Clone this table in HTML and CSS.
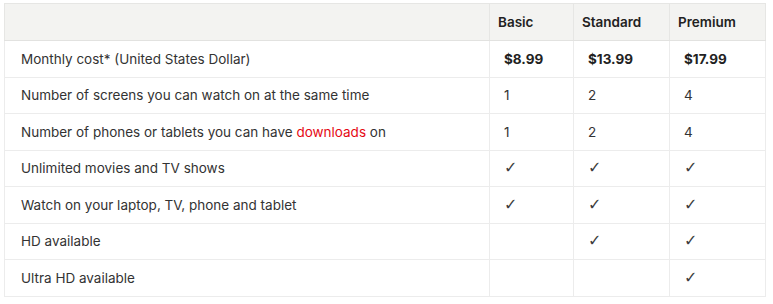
FILE: index.html
```html
<!DOCTYPE html>
<html lang="en">
<head>
<meta charset="utf-8">
<link rel="stylesheet" href="styles.css">
</head>
<body>
<div class="wrap">
<table class="plans">
  <colgroup>
    <col class="c-feat"><col class="c-basic"><col class="c-std"><col class="c-prem">
  </colgroup>
  <thead>
    <tr><th></th><th>Basic</th><th>Standard</th><th>Premium</th></tr>
  </thead>
  <tbody>
    <tr><td class="feat">Monthly cost* (United States Dollar)</td><td class="price">$8.99</td><td class="price">$13.99</td><td class="price">$17.99</td></tr>
    <tr><td class="feat">Number of screens you can watch on at the same time</td><td>1</td><td>2</td><td>4</td></tr>
    <tr><td class="feat">Number of phones or tablets you can have <a class="link" href="#">downloads</a> on</td><td>1</td><td>2</td><td>4</td></tr>
    <tr><td class="feat">Unlimited movies and TV shows</td><td><span class="chk">✓</span></td><td><span class="chk">✓</span></td><td><span class="chk">✓</span></td></tr>
    <tr><td class="feat">Watch on your laptop, TV, phone and tablet</td><td><span class="chk">✓</span></td><td><span class="chk">✓</span></td><td><span class="chk">✓</span></td></tr>
    <tr><td class="feat">HD available</td><td></td><td><span class="chk">✓</span></td><td><span class="chk">✓</span></td></tr>
    <tr><td class="feat">Ultra HD available</td><td></td><td></td><td><span class="chk">✓</span></td></tr>
  </tbody>
</table>
</div>
</body>
</html>
```
FILE: styles.css
```css
html, body { margin: 0; padding: 0; background: #fff; }
.wrap { padding: 3px 8px 0 4px; }
.plans {
  border-collapse: collapse;
  width: 761px;
  table-layout: fixed;
  font-family: Inter, "Noto Sans", sans-serif;
  font-size: 13.5px;
  color: #333;
  border: 1px solid #d6d6d6;
}
.c-feat { width: 485px; }
.c-basic { width: 84px; }
.c-std { width: 96px; }
.c-prem { width: 96px; }
.plans th {
  background: #f3f3f1;
  height: 36px;
  text-align: left;
  padding: 0 8px;
  font-weight: 600;
  color: #222;
  border: 1px solid #e6e6e4;
  border-bottom-color: #e2e2e0;
}
.plans td {
  height: 35.5px;
  padding: 0 14px;
  border: 1px solid #ececec;
  vertical-align: middle;
}
.plans td.feat { padding-left: 16px; }
.plans td.price { font-weight: 700; color: #222; }
.chk { font-family: "DejaVu Sans", sans-serif; font-size: 16px; line-height: 1; color: #3c3c3c; }
.link { color: #e50914; text-decoration: none; }
```
